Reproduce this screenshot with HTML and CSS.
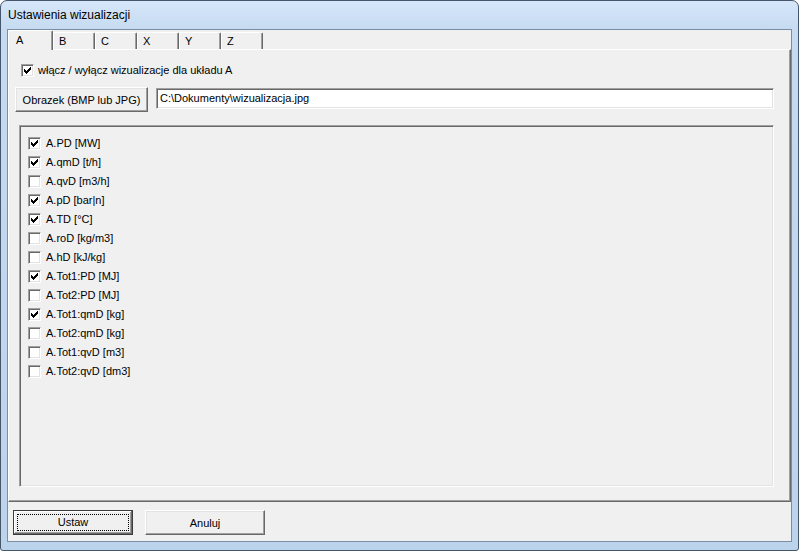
FILE: index.html
```
<!DOCTYPE html>
<html>

<head>
    <title>Ustawienia wizualizacji</title>
    <link rel="stylesheet" href="styles.css">
</head>

<body>
    <div class="window">
        <div class="titlebar">Ustawienia wizualizacji</div>
        <div class="client">
            <div class="tabs">
                <span class="tab active">A</span>
                <span class="tab">B</span>
                <span class="tab">C</span>
                <span class="tab">X</span>
                <span class="tab">Y</span>
                <span class="tab">Z</span>
            </div>
            <div class="panel">
                <label class="check top-check"><span class="box on"></span>włącz / wyłącz wizualizacje dla układu A</label>
                <div class="file-row">
                    <button class="btn file-btn">Obrazek (BMP lub JPG)</button>
                    <div class="field">C:\Dokumenty\wizualizacja.jpg</div>
                </div>
                <div class="list">
                    <label class="check"><span class="box on"></span>A.PD [MW]</label>
                    <label class="check"><span class="box on"></span>A.qmD [t/h]</label>
                    <label class="check"><span class="box"></span>A.qvD [m3/h]</label>
                    <label class="check"><span class="box on"></span>A.pD [bar|n]</label>
                    <label class="check"><span class="box on"></span>A.TD [°C]</label>
                    <label class="check"><span class="box"></span>A.roD [kg/m3]</label>
                    <label class="check"><span class="box"></span>A.hD [kJ/kg]</label>
                    <label class="check"><span class="box on"></span>A.Tot1:PD [MJ]</label>
                    <label class="check"><span class="box"></span>A.Tot2:PD [MJ]</label>
                    <label class="check"><span class="box on"></span>A.Tot1:qmD [kg]</label>
                    <label class="check"><span class="box"></span>A.Tot2:qmD [kg]</label>
                    <label class="check"><span class="box"></span>A.Tot1:qvD [m3]</label>
                    <label class="check"><span class="box"></span>A.Tot2:qvD [dm3]</label>
                </div>
            </div>
            <div class="actions">
                <button class="btn default"><span class="focus">Ustaw</span></button>
                <button class="btn">Anuluj</button>
            </div>
        </div>
    </div>
</body>

</html>
```

FILE: styles.css
```
body {
    margin: 0;
    padding: 0;
    font-family: "Liberation Sans", Arial, sans-serif;
    font-size: 11px;
    color: #000;
    background: #fff;
}

.window {
    width: 799px;
    height: 551px;
    box-sizing: border-box;
    border: 1px solid #46566a;
    border-radius: 7px 7px 3px 3px;
    background: linear-gradient(to bottom, #d6e7f9 0px, #c6daf1 28px, #bcd3ec 100%);
    display: flex;
    flex-direction: column;
}

.titlebar {
    height: 28px;
    line-height: 28px;
    padding-left: 7px;
    font-size: 12px;
}

.client {
    margin: 0 6px 8px 6px;
    flex-grow: 1;
    background: #f0f0f0;
    border: 1px solid #7b8ea4;
    display: flex;
    flex-direction: column;
}

/* tabs */

.tabs {
    display: flex;
    align-items: flex-end;
    height: 19px;
}

.tab {
    box-sizing: border-box;
    width: 42px;
    height: 17px;
    padding: 2px 0 0 5px;
    border-top: 1px solid #fff;
    border-left: 1px solid #fff;
    border-right: 1px solid #696969;
    box-shadow: inset -1px 0 #a0a0a0;
    border-radius: 2px 2px 0 0;
}

.tab.active {
    width: 45px;
    height: 20px;
    margin-bottom: -1px;
    padding: 3px 0 0 7px;
    background: #f0f0f0;
    position: relative;
    z-index: 1;
}

.panel {
    height: 453px;
    box-sizing: border-box;
    border-top: 1px solid #fff;
    border-left: 1px solid #fff;
    border-right: 1px solid #696969;
    border-bottom: 1px solid #696969;
    box-shadow: inset -1px -1px #a0a0a0;
    padding: 14px 16px 0 10px;
    display: flex;
    flex-direction: column;
}

/* checkboxes */

.check {
    display: flex;
    align-items: center;
    height: 13px;
    line-height: 13px;
    white-space: nowrap;
}

.box {
    box-sizing: border-box;
    width: 13px;
    height: 13px;
    flex-shrink: 0;
    margin-right: 5px;
    background: #fff;
    border-top: 1px solid #a0a0a0;
    border-left: 1px solid #a0a0a0;
    border-right: 1px solid #fff;
    border-bottom: 1px solid #fff;
    box-shadow: inset 1px 1px #696969, inset -1px -1px #e3e3e3;
    position: relative;
}

.box.on::after {
    content: "";
    position: absolute;
    left: 2px;
    top: 2px;
    width: 7px;
    height: 7px;
    background: #000;
    clip-path: polygon(0 2px, 1px 2px, 1px 3px, 2px 3px, 2px 4px, 3px 4px, 3px 3px, 4px 3px, 4px 2px, 5px 2px, 5px 1px, 6px 1px, 6px 0, 7px 0, 7px 3px, 6px 3px, 6px 4px, 5px 4px, 5px 5px, 4px 5px, 4px 6px, 3px 6px, 3px 7px, 2px 7px, 2px 6px, 1px 6px, 1px 5px, 0 5px);
}

.top-check {
    margin-left: 2px;
}

.top-check .box {
    margin-right: 4px;
}

/* buttons & fields */

.btn {
    box-sizing: border-box;
    height: 25px;
    width: 120px;
    padding: 0;
    font-family: inherit;
    font-size: 11px;
    color: #000;
    background: #f0f0f0;
    border-top: 1px solid #fff;
    border-left: 1px solid #fff;
    border-right: 1px solid #696969;
    border-bottom: 1px solid #696969;
    box-shadow: inset -1px -1px #a0a0a0, inset 1px 1px #e3e3e3;
}

.btn.default {
    border: 1px solid #3c3c3c;
    box-shadow: inset -1px -1px #696969, inset 1px 1px #fff, inset -2px -2px #a0a0a0;
    padding: 3px;
}

.focus {
    display: block;
    height: 100%;
    box-sizing: border-box;
    border: 1px dotted #000;
    line-height: 15px;
}

.file-row {
    display: flex;
    align-items: flex-start;
    gap: 8px;
    margin: 10px 0 0 -4px;
    height: 25px;
}

.file-btn {
    width: 133px;
}

.field {
    flex-grow: 1;
    box-sizing: border-box;
    height: 21px;
    margin-top: 1px;
    padding: 3px 3px;
    line-height: 13px;
    background: #fff;
    border-top: 1px solid #a0a0a0;
    border-left: 1px solid #a0a0a0;
    border-right: 1px solid #fff;
    border-bottom: 1px solid #fff;
    box-shadow: inset 1px 1px #696969, inset -1px -1px #e3e3e3;
}

.list {
    margin-top: 13px;
    height: 362px;
    box-sizing: border-box;
    border-top: 1px solid #a0a0a0;
    border-left: 1px solid #a0a0a0;
    border-right: 1px solid #fff;
    border-bottom: 1px solid #fff;
    box-shadow: inset 1px 1px #696969, inset -1px -1px #e3e3e3;
    padding: 11px 0 0 8px;
    display: flex;
    flex-direction: column;
    gap: 6px;
}

.actions {
    display: flex;
    gap: 12px;
    padding: 8px 0 0 5px;
}
```
